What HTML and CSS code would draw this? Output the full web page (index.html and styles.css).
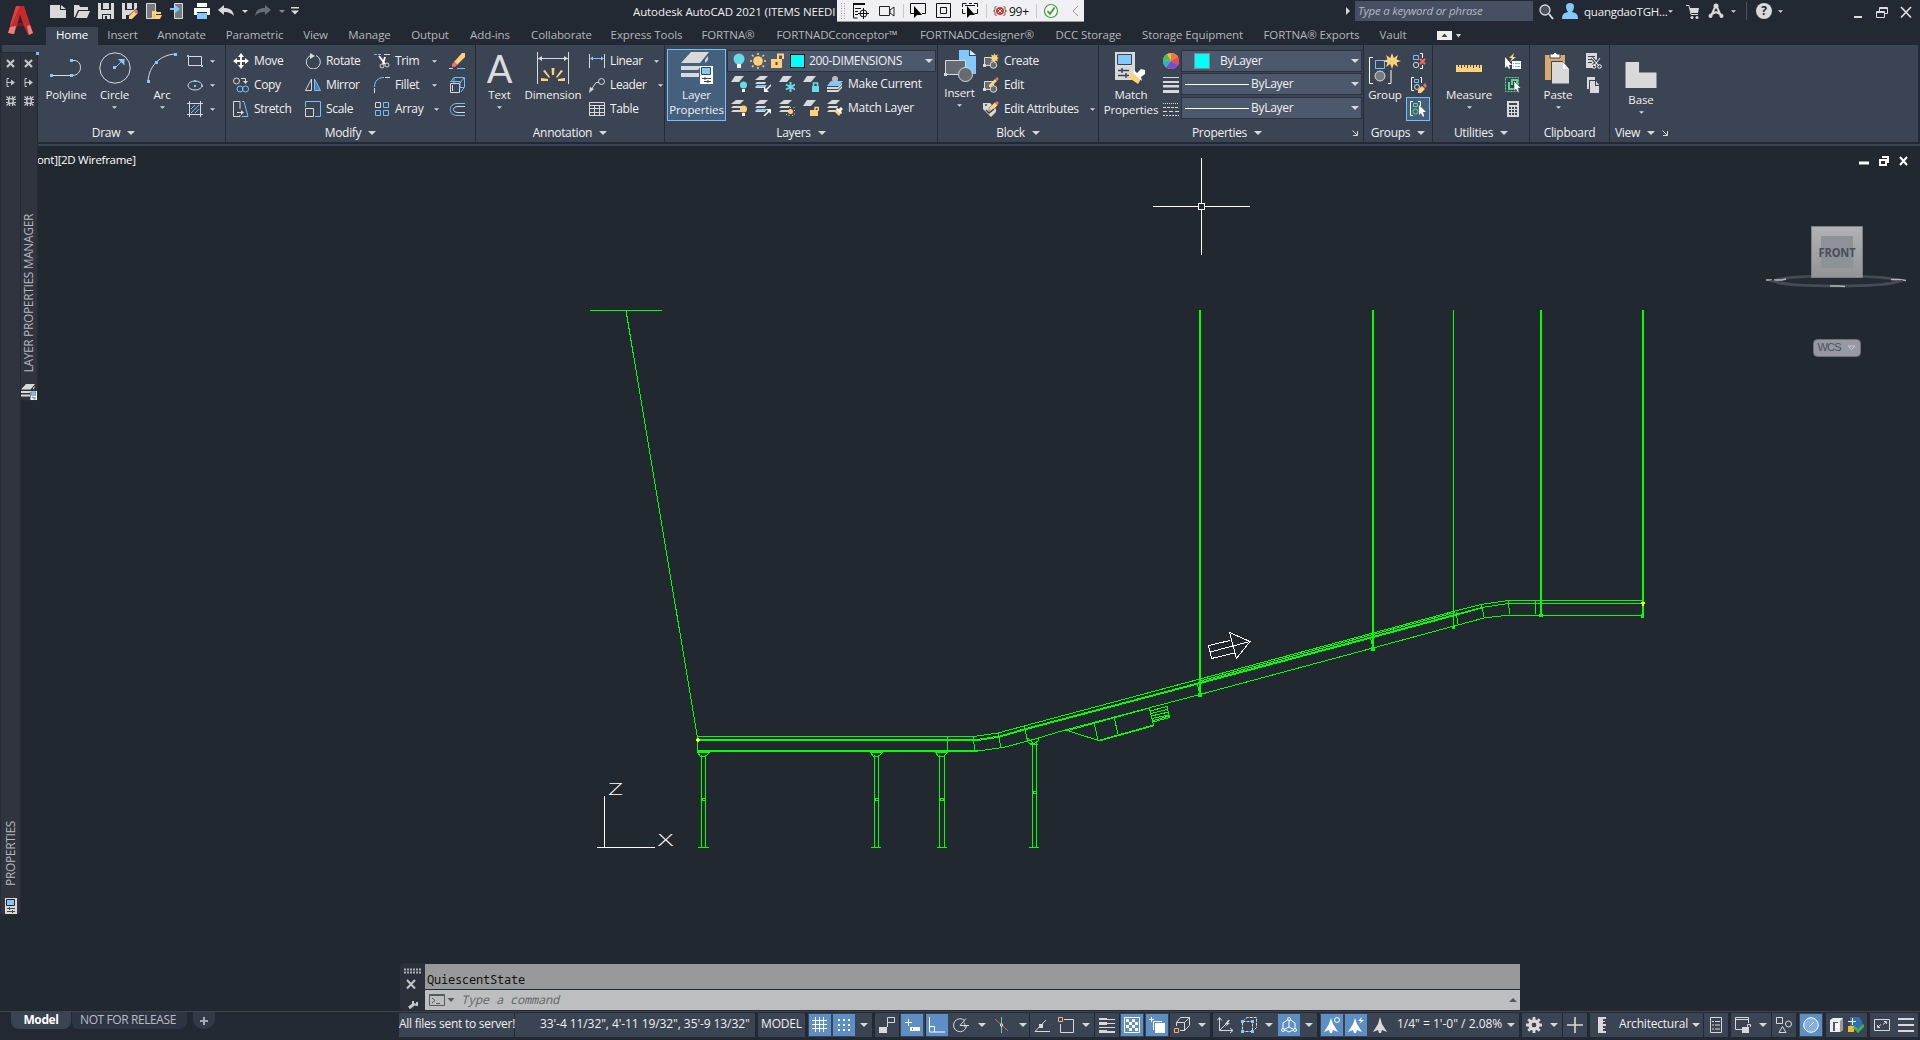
FILE: index.html
```html
<!DOCTYPE html>
<html lang="en">
<head>
<meta charset="utf-8">
<title>Autodesk AutoCAD 2021</title>
<link rel="stylesheet" href="styles.css">
</head>
<body>
<svg class="sprite" aria-hidden="true">
  <!-- quick access -->
  <symbol id="new" viewBox="0 0 16 16"><path class="fl" d="M0 2h10v5h6v8H0zM11 2l5 4h-5z"/></symbol>
  <symbol id="open" viewBox="0 0 16 16"><path class="fl" d="M0 2h5l1 2h8v3H4L1 14H0zM5 8h11l-3 7H2z"/></symbol>
  <symbol id="save" viewBox="0 0 16 16"><path class="fl" d="M0 0h3v7h10V0h3v16h-3v-5H4v5H0zM5 0h6v6H5zM5 12h7v4H9v-3H7v3H5z"/></symbol>
  <symbol id="saveas" viewBox="0 0 16 16"><path class="fl" d="M0 0h3v7h9V0h3v5l-8 7H4v4H0zM5 0h5v6H5z"/><path class="fy" d="M7 13l6-6 3 3-6 6H7z"/><path class="fr" d="M12 8l2-2 2 2-2 3z"/></symbol>
  <symbol id="fromweb" viewBox="0 0 16 16"><path fill="#777b80" stroke="#d9d9d9" d="M.5.500h9v15h-9z"/><path class="fy" d="M6 8h4l1 1h4v2H9l-2 5H6zM9 12h7l-2 4H7z"/></symbol>
  <symbol id="toweb" viewBox="0 0 16 16"><path fill="#777b80" stroke="#d9d9d9" d="M4.500.500h8v15h-8z"/><path class="fb" d="M0 5h5V2l5 4-5 4V7H0z"/></symbol>
  <symbol id="print" viewBox="0 0 16 16"><path fill="#fff" d="M3 0h10v4H3zM0 5h16v7h-3V9H3v3H0z"/><path class="fb" d="M3 10h10v6H3z"/></symbol>
  <symbol id="undo" viewBox="0 0 16 16"><path class="fl" d="M0 7l6-5v3c6 0 9 2 10 8-3-3-5-4-10-4v3z"/></symbol>
  <symbol id="redo" viewBox="0 0 16 16"><path fill="#686e77" d="M16 7l-6-5v3C4 5 1 7 0 13c3-3 5-4 10-4v3z"/></symbol>
  <symbol id="dn" viewBox="0 0 8 4"><path class="fl" d="M0 0h8L4 4z"/></symbol>
  <symbol id="menu" viewBox="0 0 8 8"><path class="fl" d="M0 0h8v1.500H0zM0 3.500h8l-4 4z"/></symbol>
  <!-- draw -->
  <symbol id="polyline" viewBox="0 0 32 32"><path class="l" d="M1 23.500h20M21 8.500h3c9 0 9 15-2 15"/><path class="fb" d="M0 22h3v3H0zM20 22h3v3h-3zM20 7h3v3h-3z"/></symbol>
  <symbol id="circle" viewBox="0 0 32 32"><circle class="l" cx="16" cy="16" r="15.200"/><path class="b" d="M16 16l8-8"/><path class="fb" d="M14 14h3v3h-3zM19 7h6.500v6.500z"/></symbol>
  <symbol id="arc" viewBox="0 0 32 32"><path class="l" d="M2 29C3 14 14 3 29 2"/><path class="fb" d="M1 28h3v3H1zM9 9h3v3H9zM28 1h3v3h-3z"/></symbol>
  <symbol id="rect" viewBox="0 0 16 16"><path class="l" d="M1.500 3.500h13v9h-13z"/><path class="fb" d="M0 2h2v2H0zM14 12h2v2h-2z"/></symbol>
  <symbol id="ellipse" viewBox="0 0 16 16"><ellipse class="l" cx="8" cy="8.500" rx="7" ry="4.500"/><path class="fb" d="M7 3h2v2H7zM7 8h2v2H7zM14 8h2v2h-2z"/></symbol>
  <symbol id="hatch" viewBox="0 0 16 16"><path class="l" d="M0 2.500h16M0 13.500h16M2.500 0v16M13.500 0v16"/><path class="b" d="M4 8l4-4M4 12l8-8M8 12l4-4"/></symbol>
  <!-- modify -->
  <symbol id="move" viewBox="0 0 16 16"><path class="w2" d="M8 2v12M2 8h12"/><path fill="#fff" d="M8 0l3 4H5zM8 16l3-4H5zM0 8l4-3v6zM16 8l-4-3v6z"/></symbol>
  <symbol id="copy" viewBox="0 0 16 16"><circle class="l" cx="3.500" cy="4" r="3"/><path class="l" d="M8 1.500h4.500V5"/><path class="fl" d="M10 4h5l-2.500 3z"/><circle class="b" cx="7" cy="12" r="3"/><circle class="b" cx="12.500" cy="12" r="3"/></symbol>
  <symbol id="stretch" viewBox="0 0 16 16"><path class="l" d="M7 8V.500H.500v15H7V14M4 11.500h5"/><path class="fl" d="M8 9l3 2.500L8 14z"/><path class="b" d="M9 .500h2l4 15H9"/></symbol>
  <symbol id="rotate" viewBox="0 0 16 16"><path class="l" d="M11 2.500a7 7 0 1 1-6 .300M10 3"/><path class="fl" d="M5 0l5 3-5 3z"/></symbol>
  <symbol id="mirror" viewBox="0 0 16 16"><path class="l" d="M.500 13.500h6V2z"/><path class="mf" d="M15.500 13.500h-6V2z"/></symbol>
  <symbol id="scale" viewBox="0 0 16 16"><path class="b" d="M.500 6V.500h15v15H10"/><path class="l" d="M.500 7.500h8v8h-8z"/></symbol>
  <symbol id="trim" viewBox="0 0 16 16"><path class="b" stroke-dasharray="3 1" d="M0 1.500h8"/><path class="l" d="M10 1.500h6"/><path class="w2" d="M5 3l6 8M11 4l-2 7"/><circle class="l" cx="8" cy="13" r="2"/><circle class="l" cx="13" cy="12" r="2"/></symbol>
  <symbol id="fillet" viewBox="0 0 16 16"><path class="b" d="M.500 10C.500 4 4 .500 10 .500"/><path class="l" d="M.500 11v5M11 .500h5"/></symbol>
  <symbol id="array" viewBox="0 0 16 16"><path class="l" d="M1.500 1.500h5v5h-5z"/><path class="b" d="M9.500 1.500h5v5h-5zM1.500 9.500h5v5h-5zM9.500 9.500h5v5h-5z"/></symbol>
  <symbol id="erase" viewBox="0 0 16 16"><path class="fy" d="M5 9l8-9h3v4l-8 8z"/><path class="fr" d="M3 11l2.500-2.500 3 3L6 14H3z"/><path class="l" d="M0 15.500h4"/><path class="b" d="M8 15.500h8"/></symbol>
  <symbol id="explode" viewBox="0 0 16 16"><path class="l" d="M1.500 6.500h9v9h-9zM3.500 8v6"/><path class="b" d="M1.500 5L5 .500h10.500v9.500l-3.500 5M5 1v5M11 6l4-5M1.500 4.500h9.500v6h4"/></symbol>
  <symbol id="offset" viewBox="0 0 16 16"><path class="b" d="M16 2.500H8c-9 0-9 12 0 12h8"/><path class="l" d="M16 5.500H9c-6 0-6 6 0 6h7"/></symbol>
  <!-- annotation -->
  <symbol id="dimension" viewBox="0 0 32 32"><path class="l" d="M.500 0v32M31.500 0v32M1 6.500h30"/><path class="fl" d="M1 6.500l4-2.500v5zM31 6.500L27 4v5z"/><path class="fy" d="M14.500 16h3l-.500 7h-2zM6 19l2-1 5 7-1 1zM26 19l-2-1-5 7 1 1zM4 26l7 1v2H4zM28 26l-7 1v2h7z"/></symbol>
  <symbol id="linear" viewBox="0 0 16 16"><path class="l" d="M.500 1v14M15.500 1v14"/><path class="b" d="M2 5.500h12"/><path class="fb" d="M1 5.500l3-2v4zM15 5.500l-3-2v4z"/></symbol>
  <symbol id="leader" viewBox="0 0 16 16"><circle class="l" cx="12.500" cy="4.500" r="3"/><path class="l" d="M10 5.500H7L2 13"/><path class="fl" d="M0 16l1-6 4 2z"/></symbol>
  <symbol id="table" viewBox="0 0 16 16"><path class="l" d="M.500 1.500h15v13H.500zM.500 4.500h15M.500 7.500h15M.500 11.500h15M5.500 4v10M10.500 4v10"/></symbol>
  <!-- layers -->
  <symbol id="layerprops" viewBox="0 0 32 32"><path class="fl" d="M10 0h18l-9 11H0zM0 14h20l-3 4H0zM0 21h18v4H0zM24 8l3-4v4l-3 3z"/><path fill="#fff" d="M19 14h13v18H19z"/><path class="fb" stroke="#3b4453" d="M20.500 15.500h9v7h-9z"/><path stroke="#444" fill="none" d="M21 26.500h9M23 29.500h7M24 25v3M27 28v3"/></symbol>
  <symbol id="bulb" viewBox="0 0 12 16"><circle class="fc" cx="6" cy="6" r="5.500"/><path fill="#fff" d="M4 11h4v4H4z"/></symbol>
  <symbol id="sun" viewBox="0 0 16 16"><circle class="fy" cx="8" cy="8" r="4.800"/><path stroke="#ffd27a" stroke-width="1.500" d="M8 0v2M8 14v2M0 8h2M14 8h2M2 2l1.500 1.500M12.500 12.500L14 14M2 14l1.500-1.500M12.500 3.500L14 2"/></symbol>
  <symbol id="lock" viewBox="0 0 16 16"><path class="fy" d="M1 6h11v9H1z"/><path fill="none" stroke="#ffd27a" stroke-width="2" d="M8 6V1.500h5V6"/><path fill="#3b4453" d="M5.500 9h2v3h-2z"/></symbol>
  <symbol id="sheet" viewBox="0 0 16 16"><path class="fl" d="M4 0h9L8 6H0z"/></symbol>
  <symbol id="stack" viewBox="0 0 16 16"><path class="fl" d="M5 0h8L9 4H0zM2 6h9l-1 2H0zM2 10h9l-1 2H0z"/></symbol>
  <symbol id="l1" viewBox="0 0 16 16"><use href="#sheet"/><circle class="fc" cx="12.500" cy="9" r="3.500"/><path fill="#fff" d="M11 13h3v3h-3z"/></symbol>
  <symbol id="l2" viewBox="0 0 16 16"><use href="#stack"/><path class="fb" d="M2 9h10l-2 2H0z"/><path stroke="#fff" stroke-width="1.500" d="M16 9l-6 6"/><path fill="#fff" d="M9 11v5h5z"/></symbol>
  <symbol id="l3" viewBox="0 0 16 16"><use href="#sheet"/><path stroke="#66dbe8" stroke-width="2" d="M11.500 6v10M7 8.500l9 5M7 13.500l9-5"/></symbol>
  <symbol id="l4" viewBox="0 0 16 16"><use href="#sheet"/><path class="fc" d="M9 10h7v6H9z"/><path fill="none" stroke="#66dbe8" stroke-width="1.500" d="M10.500 10V7h4v3"/></symbol>
  <symbol id="l5" viewBox="0 0 16 16"><path class="fb" d="M4 5h12l-4 5H0z"/><path class="fl" d="M0 11h11l4-4v2l-4 4H0zM0 14h11l4-4v2l-4 4H0z"/><circle cx="8" cy="3" r="3" fill="#b8bcc2"/></symbol>
  <symbol id="l6" viewBox="0 0 16 16"><use href="#stack"/><circle class="fy" cx="12.500" cy="9" r="3.500"/><path fill="#fff" d="M11 13h3v3h-3z"/></symbol>
  <symbol id="l7" viewBox="0 0 16 16"><use href="#stack"/><path class="fb" d="M2 9h10l-2 2H0z"/><path stroke="#fff" stroke-width="1.500" d="M9 16l6-6"/><path fill="#fff" d="M16 14V9h-5z"/></symbol>
  <symbol id="l8" viewBox="0 0 16 16"><use href="#stack"/><circle class="fy" cx="11.500" cy="11.500" r="2.500"/><path stroke="#ffd27a" stroke-dasharray="1 2.500" fill="none" d="M7.500 7.500h8v8h-8z"/></symbol>
  <symbol id="l9" viewBox="0 0 16 16"><use href="#sheet"/><path class="fy" d="M7 10h8v6H7z"/><path fill="none" stroke="#ffd27a" stroke-width="1.500" d="M12 10V7.500h3.300V11"/></symbol>
  <symbol id="l10" viewBox="0 0 16 16"><use href="#stack"/><path class="fy" d="M7 11l3-2 4 4-2 3z"/><path fill="#fff" d="M10 8l2 1 2-2 2 2-2 2 1 2-1 1-5-5z"/></symbol>
  <!-- block -->
  <symbol id="insert" viewBox="0 0 32 32"><path class="fb" d="M15 0h10v6h7v18H15z"/><path fill="#dff0ff" d="M26 0l6 5h-6z"/><path fill="#666a72" stroke="#d9d9d9" d="M1.500 10.500h20v14h-20z"/><circle cx="21.500" cy="24.500" r="7" fill="#666a72" stroke="#d9d9d9"/><path class="fl" d="M0 23h3v3H0z"/></symbol>
  <symbol id="create" viewBox="0 0 16 16"><path fill="#666a72" stroke="#d9d9d9" d="M1.500 4.500h9v8h-9z"/><circle cx="10.500" cy="12" r="3.300" fill="#666a72" stroke="#d9d9d9"/><path class="fy" d="M11.500 0l1 2.500 2.500-1-1 2.500 2 1-2 1 1 2.500-2.500-1-1 2.500-1-2.500-2.500 1 1-2.500-2-1 2-1-1-2.500 2.500 1z"/><path class="fl" d="M0 11h3v3H0z"/></symbol>
  <symbol id="edit" viewBox="0 0 16 16"><path fill="#666a72" stroke="#d9d9d9" d="M1.500 4.500h9v8h-9z"/><circle cx="10.500" cy="12" r="3.300" fill="#666a72" stroke="#d9d9d9"/><path class="fy" d="M6 8l6-6 2 2-6 6H6z"/><path class="fr" d="M12 2l2-2 2 2-2 2z"/><path class="fl" d="M0 11h3v3H0z"/></symbol>
  <symbol id="attr" viewBox="0 0 16 16"><path class="fl" d="M0 2h7l6 6v3l-5 5-8-8z"/><path class="fy" stroke="#3b4453" stroke-width=".5" d="M6 7l6-6 3 3-6 6H6z"/><path class="fr" d="M12 2l2-2 2 2-2 2z"/><path stroke="#3b4453" fill="none" stroke-width="1.500" d="M3 9l3 3 5-4M2 4h2"/></symbol>
  <!-- properties -->
  <symbol id="match" viewBox="0 0 32 32"><path class="fl" d="M0 0h20v28H0z"/><path class="fb" stroke="#3b4453" d="M2.500 2.500h14v10h-14z"/><path stroke="#3b4453" stroke-width="1.500" d="M3 18.500h11M3 23.500h11M7 16v5M11 21v5"/><path class="fy" d="M13 25l5-5 8 7-3 5z"/><path fill="#fff" d="M19 18l3 3 4-4 4 1v4l-4 3 1 4-9-8z"/></symbol>
  <symbol id="wheel" viewBox="0 0 16 16"><circle cx="8" cy="8" r="8" fill="#efc33f"/><path fill="#f2763e" d="M8 8V0a8 8 0 0 1 7 4z"/><path fill="#e34c56" d="M8 8l7-4a8 8 0 0 1 0 8z"/><path fill="#7b4bd6" d="M8 8l7 4a8 8 0 0 1-7 4 8 8 0 0 1-5-2z"/><path fill="#25b5c9" d="M8 8l-5 6a8 8 0 0 1-3-7z"/><path fill="#54b95d" d="M8 8L0 7a8 8 0 0 1 4-6z"/></symbol>
  <symbol id="weights" viewBox="0 0 16 16"><path class="fl" d="M0 0h16v1H0zM0 4h16v2H0zM0 8h16v2.500H0zM0 13h16v3H0z"/></symbol>
  <symbol id="types" viewBox="0 0 16 16"><path class="l" stroke-dasharray="1 1" d="M0 2.500h16"/><path class="l" stroke-dasharray="3 1" d="M0 6.500h16"/><path class="l" stroke-dasharray="4 2" d="M0 10.500h16"/><path class="l" stroke-dasharray="2 1" d="M0 14.500h16"/></symbol>
  <symbol id="launch" viewBox="0 0 6 6"><path class="l" d="M.500.500L5 5M5.500 1v4.500H1"/></symbol>
  <!-- groups -->
  <symbol id="group" viewBox="0 0 32 32"><path class="w" d="M4 5.500H.500v26H4M19 31.500h3V18M14 5.500"/><path class="b" d="M6.500 8.500h9v8h-9z"/><circle cx="11" cy="24" r="5" fill="#777b80" stroke="#d9d9d9"/><path class="fy" d="M23 1l1.800 5L29 3l-1.500 4.500L32 9l-4.500 1.500L29 15l-4.200-3L23 17l-1.800-5-4.200 3 1.500-4.500L14 9l4.500-1.500L17 3l4.200 3z"/></symbol>
  <symbol id="ungroup" viewBox="0 0 16 16"><path class="b" d="M2.500 2.500h5v4h-5z"/><circle class="l" cx="5" cy="12" r="2.700"/><path class="w" d="M9 .500h2.500V5M9 15.500h2.500V12"/><path stroke="#f66" stroke-width="2" d="M9 6l5 5M14 6l-5 5"/></symbol>
  <symbol id="gedit" viewBox="0 0 16 16"><path class="w" d="M3 .500H.500v13H3M9 .500h1.500V6"/><path class="b" d="M3.500 2.500h4v3h-4z"/><circle class="l" cx="6" cy="10" r="2.500"/><path class="fy" d="M7 13l4-4 3 3-4 4H7z"/><path class="fr" d="M12 8l2-2 2 3-2 2z"/></symbol>
  <symbol id="gsel" viewBox="0 0 16 16"><path class="w" d="M3 .500H.500v14H3M8 .500h2.500V5"/><path class="g" d="M3.500 2.500h4v3h-4z"/><circle class="g" cx="5.500" cy="10.500" r="2.500"/><path fill="#fff" d="M9 4v10l2-2 2 4 1-1-1-4h3z"/></symbol>
  <!-- utilities -->
  <symbol id="measure" viewBox="0 0 32 32"><path class="fy" d="M3 13h26v7H3z"/><path stroke="#3b4453" d="M5.500 13v2M8.500 13v3M11.500 13v2M14.500 13v3M17.500 13v2M20.500 13v3M23.500 13v2M26.500 13v3"/></symbol>
  <symbol id="quick" viewBox="0 0 16 16"><path class="fy" d="M9 0L4 5h3l-2 4 6-5H8z"/><path fill="#fff" d="M0 4v11l2-2 2 3 1-1-1-3h3zM7 8h9v8H7z"/><path class="b" d="M8 10.500h1M10 10.500h5M8 13.500h1M10 13.500h5"/></symbol>
  <symbol id="selall" viewBox="0 0 16 16"><path class="g" stroke-dasharray="2 1" d="M.500.500h13v14h-13z"/><path class="g" stroke-width="2" d="M4 5v7h7V10M12 8V3H7v5"/><path fill="#fff" stroke="#333" stroke-width=".5" d="M9 4v10l2-2 2 4 1-1-1-4h3z"/></symbol>
  <symbol id="calc" viewBox="0 0 16 16"><path class="fl" d="M2 0h12v16H2z"/><path fill="#3b4453" d="M4 2h8v2H4zM4 6h2v2H4zM7 6h2v2H7zM10 6h2v2h-2zM4 9h2v2H4zM7 9h2v2H7zM10 9h2v2h-2zM4 12h2v2H4zM7 12h2v2H7zM10 12h2v2h-2z"/></symbol>
  <symbol id="paste" viewBox="0 0 32 32"><path fill="#d9a871" d="M3 3h20v25H3z"/><path fill="#fff" stroke="#3b4453" d="M8 2h3l2-2 2 2h3v4H8z"/><path class="fl" stroke="#3b4453" d="M9.500 9.500h11l7 8V32h-18z"/><path fill="#fff" d="M21 10l6 7h-6z"/></symbol>
  <symbol id="cut" viewBox="0 0 16 16"><path class="fl" d="M0 0h11v7l-5 8H0z"/><path stroke="#3b4453" d="M2 3.500h7M2 6.500h4M2 9.500h4"/><path stroke="#3b4453" stroke-width="3" d="M6 5l7 8M14 5l-7 8"/><path class="w" d="M6 5l7 8M14 5l-6 8"/><circle class="w" cx="8" cy="13.500" r="1.800"/><circle class="w" cx="13.500" cy="13.500" r="1.800"/></symbol>
  <symbol id="copyclip" viewBox="0 0 16 16"><path class="fl" d="M1 0h8v3H3v9H1zM4 4h5v5h4v7H4zM10 4l3 4h-3z"/></symbol>
  <symbol id="base" viewBox="0 0 32 32"><path class="fl" d="M0 4h14v11h18v16H0z"/></symbol>
  <!-- palettes -->
  <symbol id="px" viewBox="0 0 9 9"><path stroke="#c4c6ca" stroke-width="2.200" d="M1 1l7 7M8 1L1 8"/></symbol>
  <symbol id="pin" viewBox="0 0 9 9"><path stroke="#c4c6ca" fill="none" d="M3 .500H1v8h2M1 4.500h6"/><path fill="#c4c6ca" d="M5 1.500l4 3-4 3z"/></symbol>
  <symbol id="gearp" viewBox="0 0 10 10"><path fill="none" stroke="#c4c6ca" stroke-width="1.500" d="M2.800 2.800h4.400v4.400H2.800z"/><path stroke="#c4c6ca" stroke-width="1.200" d="M3.500 0v2.500M6.500 0v2.500M3.500 7.500V10M6.500 7.500V10M0 3.500h2.500M0 6.500h2.500M7.500 3.500H10M7.500 6.500H10M.500.500l2 2M9.500.500l-2 2M.500 9.500l2-2M9.500 9.500l-2-2"/></symbol>
  <symbol id="pal" viewBox="0 0 12 16"><path class="fl" d="M0 0h12v16H0z"/><path class="fb" stroke="#222" d="M1.500 1.500h8v6h-8z"/><path stroke="#444" fill="none" d="M2 10.500h8M2 13.500h8M4.500 9v3M7.500 12v3"/></symbol>
  <!-- status bar -->
  <symbol id="grid" viewBox="0 0 16 16"><path class="w" d="M3.500 0v15M7.500 0v15M11.500 0v15M0 3.500h15M0 7.500h15M0 11.500h15"/></symbol>
  <symbol id="snap" viewBox="0 0 16 16"><path fill="#fff" d="M2 2h2v2H2zM7 2h2v2H7zM12 2h2v2h-2zM2 7h2v2H2zM7 7h2v2H7zM12 7h2v2h-2zM2 12h2v2H2zM7 12h2v2H7zM12 12h2v2h-2z"/></symbol>
  <symbol id="infer" viewBox="0 0 16 16"><path class="fl" d="M0 10h8v6H0z"/><path class="l" d="M8.500 10V.500h7v5h-7"/></symbol>
  <symbol id="dyn" viewBox="0 0 16 16"><path class="w" d="M4.500 2v7M1 5.500h7"/><path fill="#fff" d="M6 10h10v4H6z"/><path fill="#5d8fc4" d="M8 11h1v2H8z"/></symbol>
  <symbol id="ortho" viewBox="0 0 16 16"><path class="w" d="M.500 0v15H16M1 9.500h4.500V15"/></symbol>
  <symbol id="polar" viewBox="0 0 16 16"><path class="l" d="M12 4a6.500 6.500 0 1 0 1.500 5M7 8.500h9M7 8.500l6-7M11 5.500c1 1 1 3 1 5"/></symbol>
  <symbol id="iso" viewBox="0 0 16 16"><path stroke="#e0605e" d="M1 2l13 12"/><path stroke="#5fd68b" d="M7.500 0v16"/><path fill="#3b4453" stroke="#ddd" d="M6.500 7h2v2h-2z"/></symbol>
  <symbol id="otrack" viewBox="0 0 16 16"><path class="l" d="M16 14.500H1L12 3"/><path class="fl" d="M5 7h4v4H5z"/></symbol>
  <symbol id="osnap" viewBox="0 0 16 16"><path class="l" d="M6 2.500h9.500v13h-13V7"/><path fill="none" stroke="#f5b183" d="M.500.500h4v4h-4z"/></symbol>
  <symbol id="lw" viewBox="0 0 16 16"><path class="fl" d="M0 1h8v2H0zM8 2h8v1H8zM0 5h8v3H0zM8 6h8v1H8zM0 10h16v1H0zM0 13h8v3H0zM8 14h8v2H8z"/></symbol>
  <symbol id="trans" viewBox="0 0 16 16"><path class="w" d="M.500.500h15v15H.500z"/><path fill="#fff" d="M2 2h3v3H2zM8 2h3v3H8zM5 5h3v3H5zM11 5h3v3h-3zM2 8h3v3H2zM8 8h3v3H8zM5 11h3v3H5zM11 11h3v3h-3z"/></symbol>
  <symbol id="cycle" viewBox="0 0 16 16"><path class="w" d="M2.500 0v5M0 2.500h5M4.500 13V4.500H13"/><path fill="#fff" d="M6 6h10v10H6z"/></symbol>
  <symbol id="osnap3" viewBox="0 0 16 16"><path class="l" d="M2.500 9V5.500h8v8H6M2.500 5.500l4-5h9v8l-5 5M10.500 5.500l5-5"/><path fill="none" stroke="#f5b183" d="M.500 11.500h4v4h-4z"/></symbol>
  <symbol id="ucs" viewBox="0 0 16 16"><path class="l" d="M2.500 1v12.500H15M0 3.500L2.500.500 5 3.500M13 11l3 2.500L13 16M2.500 13.500L9 7"/><path class="fl" d="M11 3L8 7h2l-2 3 5-4h-2l2-3z"/></symbol>
  <symbol id="filter" viewBox="0 0 16 16"><path class="l" stroke-dasharray="3 1" d="M1.500 4.500h10v10h-10zM2 4l4-3.500h9.500v10l-4 4"/><path class="fb" d="M0 3h3v3H0zM10 3h3v3h-3zM0 13h3v3H0zM10 13h3v3h-3z"/></symbol>
  <symbol id="gizmo" viewBox="0 0 16 16"><path class="w" d="M8 2l6 4v6l-6 3-6-3V6zM8 2v8l-6 3M8 10l6 3"/><circle cx="8" cy="2" r="1.500" fill="#5d8fc4" stroke="#fff"/><circle cx="2" cy="13" r="1.500" fill="#5d8fc4" stroke="#fff"/><circle cx="14" cy="13" r="1.500" fill="#5d8fc4" stroke="#fff"/></symbol>
  <symbol id="anno" viewBox="0 0 16 16"><path class="fl" d="M8 0l2 7 5 8-5-2-1 3H7l-1-3-5 2 5-8z"/></symbol>
  <symbol id="anno1" viewBox="0 0 16 16"><path fill="#fff" d="M7 1l2 6 5 8-5-2-1 3H6l-1-3-5 2 5-8z"/><circle cx="13" cy="3" r="2.500" fill="none" stroke="#fff"/></symbol>
  <symbol id="anno2" viewBox="0 0 16 16"><path fill="#fff" d="M7 1l2 6 5 8-5-2-1 3H6l-1-3-5 2 5-8zM14 0l-4 4h3l-2 3 5-4h-3z"/></symbol>
  <symbol id="gear" viewBox="0 0 16 16"><circle cx="8" cy="8" r="4" fill="none" stroke="#d9d9d9" stroke-width="3.500"/><path stroke="#d9d9d9" stroke-width="2.800" d="M8 0v4M8 12v4M0 8h4M12 8h4M2.300 2.300L5 5M11 11l2.700 2.700M2.300 13.700L5 11M11 5l2.700-2.700"/><circle cx="8" cy="8" r="2.200" fill="#3b4453"/></symbol>
  <symbol id="plus" viewBox="0 0 16 16"><path class="l" stroke-width="1.600" d="M8 0v16M0 8h16"/></symbol>
  <symbol id="ruler" viewBox="0 0 16 16"><path class="fl" d="M4 0h8v2H9v2h2v1H9v2h3v2H9v2h2v1H9v2h3v2H4z"/></symbol>
  <symbol id="list" viewBox="0 0 16 16"><path class="l" d="M2.500.500h11v15h-11zM4 4.500h2M7 4.500h5M4 8h2M7 8h5M4 12h2M7 12h5"/></symbol>
  <symbol id="uilock" viewBox="0 0 16 16"><path class="l" d="M7 12.500H.500v-12h13V6M.500 2.500h13"/><path class="fl" d="M7 10h7v6H7z"/><path class="l" d="M12.500 10V7.500h3V10"/></symbol>
  <symbol id="isolate" viewBox="0 0 16 16"><path class="l" d="M.500.500h6v6h-6zM3 15.500l3.500-6 3.500 6z"/><circle class="l" cx="12.500" cy="7" r="3"/></symbol>
  <symbol id="perf" viewBox="0 0 16 16"><circle cx="8" cy="8" r="7.300" fill="#84b0dd" stroke="#fff"/><path class="w" d="M6 10l5-5"/></symbol>
  <symbol id="cube" viewBox="0 0 16 16"><path fill="#eee" d="M1 3l3-2h10v12l-3 2H1z"/><path fill="#999" d="M11 4l3-3v12l-3 2z"/><path fill="#55585c" d="M4 5h5v6H6v3H4z"/><path fill="#fff" d="M6 6h4v5H6z"/></symbol>
  <symbol id="trusted" viewBox="0 0 16 16"><path fill="#2f6fb5" d="M2 0h9l3 4v8H2z"/><path fill="#f5b92f" d="M0 9h6v6H0z"/><path class="w" d="M0 4.500h8M4.500 1v7"/><path stroke="#3fb24a" stroke-width="3" fill="none" d="M6 10l4 4 6-6"/></symbol>
  <symbol id="full" viewBox="0 0 16 16"><path class="l" d="M.500 2.500h15v11H.500zM4 10l3-2.500M9 7.500L12 5M3.500 8v2.500H6M10 4.500h2.500V7"/></symbol>
  <symbol id="burger" viewBox="0 0 16 16"><path class="fl" d="M0 1h16v2H0zM0 7h16v2H0zM0 13h16v2H0z"/></symbol>
</svg>

<header class="titlebar">
  <div class="qat">
    <svg class="i"><use href="#new"/></svg><svg class="i"><use href="#open"/></svg><svg class="i"><use href="#save"/></svg><svg class="i"><use href="#saveas"/></svg><svg class="i"><use href="#fromweb"/></svg><svg class="i"><use href="#toweb"/></svg><svg class="i"><use href="#print"/></svg><svg class="i"><use href="#undo"/></svg><svg class="a"><use href="#dn"/></svg><svg class="i"><use href="#redo"/></svg><svg class="a dim"><use href="#dn"/></svg><svg class="m"><use href="#menu"/></svg>
  </div>
  <div class="title">Autodesk AutoCAD 2021 (ITEMS NEEDI</div>
  <div class="debugbar">
    <svg width="247" height="22" viewBox="0 0 247 22">
      <path d="M4.500 3v17M7.500 3v17" stroke="#999" stroke-dasharray="1 1.500"/>
      <path d="M16 4h12" stroke="#111" stroke-width="2"/><path d="M16.500 3v15h4M18 8.500h6M18 11.500h3M18 14.500h3" stroke="#111" fill="none"/><circle cx="26.500" cy="13.500" r="3.500" fill="none" stroke="#111"/><path d="M26.500 8v11M21 13.500h11" stroke="#111"/>
      <path d="M42.500 6.500h10v9h-10zM53 10l4-3v9l-4-3z" fill="none" stroke="#222"/>
      <path d="M66.500 4v14M149.500 4v14M199.500 4v14" stroke="#c9c8cf"/>
      <path d="M77 13.500h-3.500v-10h15v10H85" fill="none" stroke="#111"/><path d="M77 6v12l3-3h5z"/>
      <path d="M99.500 3.500h14v14h-14zM103.500 7.500h6v6h-6z" fill="none" stroke="#111"/>
      <path d="M125.500 7V3.500h4M132 3.500h3M137 3.500h3.500V7M125.500 9v4.500h3M140.500 9v4.500h-3M128 5.500h10" fill="none" stroke="#111"/><path d="M130 6v12l3-3h5z"/>
      <circle cx="163" cy="11" r="4" fill="#e3342b"/><path d="M161 9l4 4M165 9l-4 4" stroke="#fff"/><path d="M159.500 6.500c-3 0 0 4-3 4.500 3 .500 0 4.500 3 4.500M166.500 6.500c3 0 0 4 3 4.500-3 .500 0 4.500-3 4.500" fill="none" stroke="#444"/>
      <text x="172" y="16" class="dbgtext" textLength="20">99+</text>
      <circle cx="214" cy="11" r="6.500" fill="#fff" stroke="#3a9b35" stroke-width="1.200"/><path d="M210.500 11l2.500 3 4.500-6.500" fill="none" stroke="#3a9b35" stroke-width="1.800"/>
      <path d="M241 6l-5 5 5 5" fill="none" stroke="#999"/>
    </svg>
  </div>
  <svg class="tri" viewBox="0 0 4 8"><path class="fl" d="M0 0l4 4-4 4z"/></svg>
  <div class="search">Type a keyword or phrase</div>
  <svg class="lens" viewBox="0 0 16 16"><circle cx="6" cy="6" r="5" fill="#4a5160" stroke="#d9d9d9" stroke-width="1.300"/><path d="M10 10l4 5" stroke="#d9d9d9" stroke-width="2"/></svg>
  <svg class="user" viewBox="0 0 16 16"><path class="fb" d="M4 3c0-4 8-4 8 0 0 3-1 5-2 6 4 1 6 2 6 7H0c0-5 2-6 6-7-1-1-2-3-2-6z"/></svg>
  <div class="account">quangdaoTGH...</div>
  <svg class="a s"><use href="#dn"/></svg>
  <svg class="cart" viewBox="0 0 14 16"><path class="l" d="M0 1.500h3l2 9h7"/><path class="fl" d="M3.500 4H13l-1 5H5z"/><circle class="fl" cx="6" cy="13.500" r="1.500"/><circle class="fl" cx="11" cy="13.500" r="1.500"/></svg>
  <svg class="adsk" viewBox="0 0 16 16"><path d="M8 2L3 13M8 2l5 11M2 12l6-3 6 3" fill="none" stroke="#d9d9d9" stroke-width="2"/><circle class="fl" cx="8" cy="3" r="2.500"/><circle class="fl" cx="2.500" cy="13" r="2"/><circle class="fl" cx="13.500" cy="13" r="2"/></svg>
  <svg class="a s"><use href="#dn"/></svg>
  <span class="vsep"></span>
  <span class="help">?</span>
  <svg class="a s"><use href="#dn"/></svg>
  <svg class="win" viewBox="0 0 60 14"><path d="M2 11h8" stroke="#ddd" stroke-width="2"/><path d="M24.500 5.500h8v6h-8zM27.500 5V1.500h8v6H33M24 6.500h8M27 2.500h8" fill="none" stroke="#ddd"/><path d="M49 1l10 10.500M59 1L49 11.500" stroke="#ddd" stroke-width="1.700"/></svg>
</header>

<nav class="tabs">
  <span class="tab on t1">Home</span><span class="tab t2">Insert</span><span class="tab t3">Annotate</span><span class="tab t4">Parametric</span><span class="tab t5">View</span><span class="tab t6">Manage</span><span class="tab t7">Output</span><span class="tab t8">Add-ins</span><span class="tab t9">Collaborate</span><span class="tab t10">Express Tools</span><span class="tab t11">FORTNA®</span><span class="tab t12">FORTNADCconceptor™</span><span class="tab t13">FORTNADCdesigner®</span><span class="tab t14">DCC Storage</span><span class="tab t15">Storage Equipment</span><span class="tab t16">FORTNA® Exports</span><span class="tab t17">Vault</span>
  <svg class="collapse" viewBox="0 0 24 9"><path fill="#eee" d="M0 0h15v9H0z"/><path fill="#444" d="M4.500 6h6l-3-3.500z"/><path class="fl" d="M19 3h5l-2.500 3.500z"/></svg>
</nav>

<section class="ribbon">
  <div class="panel p-draw">
    <div class="tools">
      <div class="big"><svg><use href="#polyline"/></svg><span>Polyline</span></div>
      <div class="big"><svg><use href="#circle"/></svg><span>Circle</span><svg class="a s"><use href="#dn"/></svg></div>
      <div class="big"><svg><use href="#arc"/></svg><span>Arc</span><svg class="a s"><use href="#dn"/></svg></div>
      <div class="rows"><div><svg class="i"><use href="#rect"/></svg><svg class="a s"><use href="#dn"/></svg></div><div><svg class="i"><use href="#ellipse"/></svg><svg class="a s"><use href="#dn"/></svg></div><div><svg class="i"><use href="#hatch"/></svg><svg class="a s"><use href="#dn"/></svg></div></div>
    </div>
    <div class="cap">Draw<svg class="a"><use href="#dn"/></svg></div>
  </div>
  <div class="panel p-modify">
    <div class="tools">
      <div class="rows"><div><svg class="i"><use href="#move"/></svg>Move</div><div><svg class="i"><use href="#copy"/></svg>Copy</div><div><svg class="i"><use href="#stretch"/></svg>Stretch</div></div>
      <div class="rows"><div><svg class="i"><use href="#rotate"/></svg>Rotate</div><div><svg class="i"><use href="#mirror"/></svg>Mirror</div><div><svg class="i"><use href="#scale"/></svg>Scale</div></div>
      <div class="rows drop"><div><svg class="i"><use href="#trim"/></svg>Trim<svg class="a s far"><use href="#dn"/></svg></div><div><svg class="i"><use href="#fillet"/></svg>Fillet<svg class="a s far"><use href="#dn"/></svg></div><div><svg class="i"><use href="#array"/></svg>Array<svg class="a s"><use href="#dn"/></svg></div></div>
      <div class="rows"><div><svg class="i"><use href="#erase"/></svg></div><div><svg class="i"><use href="#explode"/></svg></div><div><svg class="i"><use href="#offset"/></svg></div></div>
    </div>
    <div class="cap">Modify<svg class="a"><use href="#dn"/></svg></div>
  </div>
  <div class="panel p-annot">
    <div class="tools">
      <div class="big"><span class="bigA">A</span><span>Text</span><svg class="a s"><use href="#dn"/></svg></div>
      <div class="big"><svg><use href="#dimension"/></svg><span class="wide">Dimension</span></div>
      <div class="rows drop"><div><svg class="i"><use href="#linear"/></svg>Linear<svg class="a s"><use href="#dn"/></svg></div><div><svg class="i"><use href="#leader"/></svg>Leader<svg class="a s"><use href="#dn"/></svg></div><div><svg class="i"><use href="#table"/></svg>Table</div></div>
    </div>
    <div class="cap">Annotation<svg class="a"><use href="#dn"/></svg></div>
  </div>
  <div class="panel p-layers">
    <div class="tools">
      <div class="big sel"><svg><use href="#layerprops"/></svg><span>Layer</span><span>Properties</span></div>
      <div class="layercol">
        <div class="combo layer"><svg class="bulb"><use href="#bulb"/></svg><svg class="i"><use href="#sun"/></svg><svg class="i"><use href="#lock"/></svg><i class="sw"></i><span>200-DIMENSIONS</span><svg class="a"><use href="#dn"/></svg></div>
        <div class="lrow"><svg class="i"><use href="#l1"/></svg><svg class="i"><use href="#l2"/></svg><svg class="i"><use href="#l3"/></svg><svg class="i"><use href="#l4"/></svg><svg class="i"><use href="#l5"/></svg><span>Make Current</span></div>
        <div class="lrow"><svg class="i"><use href="#l6"/></svg><svg class="i"><use href="#l7"/></svg><svg class="i"><use href="#l8"/></svg><svg class="i"><use href="#l9"/></svg><svg class="i"><use href="#l10"/></svg><span>Match Layer</span></div>
      </div>
    </div>
    <div class="cap">Layers<svg class="a"><use href="#dn"/></svg></div>
  </div>
  <div class="panel p-block">
    <div class="tools">
      <div class="big up"><svg><use href="#insert"/></svg><span>Insert</span><svg class="a s"><use href="#dn"/></svg></div>
      <div class="rows drop"><div><svg class="i"><use href="#create"/></svg>Create</div><div><svg class="i"><use href="#edit"/></svg>Edit</div><div><svg class="i"><use href="#attr"/></svg>Edit Attributes<svg class="a s"><use href="#dn"/></svg></div></div>
    </div>
    <div class="cap">Block<svg class="a"><use href="#dn"/></svg></div>
  </div>
  <div class="panel p-props">
    <div class="tools">
      <div class="big"><svg><use href="#match"/></svg><span>Match</span><span>Properties</span></div>
      <div class="rows"><div><svg class="i"><use href="#wheel"/></svg></div><div><svg class="i"><use href="#weights"/></svg></div><div><svg class="i"><use href="#types"/></svg></div></div>
      <div class="combos">
        <div class="combo"><i class="sw"></i><span>ByLayer</span><svg class="a"><use href="#dn"/></svg></div>
        <div class="combo"><i class="ln"></i><span>ByLayer</span><svg class="a"><use href="#dn"/></svg></div>
        <div class="combo"><i class="ln"></i><span>ByLayer</span><svg class="a"><use href="#dn"/></svg></div>
      </div>
    </div>
    <div class="cap">Properties<svg class="a"><use href="#dn"/></svg><svg class="launch"><use href="#launch"/></svg></div>
  </div>
  <div class="panel p-groups">
    <div class="tools">
      <div class="big"><svg><use href="#group"/></svg><span>Group</span></div>
      <div class="rows"><div><svg class="i"><use href="#ungroup"/></svg></div><div><svg class="i"><use href="#gedit"/></svg></div><div class="selbox"><svg class="i"><use href="#gsel"/></svg></div></div>
    </div>
    <div class="cap">Groups<svg class="a"><use href="#dn"/></svg></div>
  </div>
  <div class="panel p-utils">
    <div class="tools">
      <div class="big"><svg><use href="#measure"/></svg><span>Measure</span><svg class="a s"><use href="#dn"/></svg></div>
      <div class="rows"><div><svg class="i"><use href="#quick"/></svg></div><div><svg class="i"><use href="#selall"/></svg></div><div><svg class="i"><use href="#calc"/></svg></div></div>
    </div>
    <div class="cap">Utilities<svg class="a"><use href="#dn"/></svg></div>
  </div>
  <div class="panel p-clip">
    <div class="tools">
      <div class="big"><svg><use href="#paste"/></svg><span>Paste</span><svg class="a s"><use href="#dn"/></svg></div>
      <div class="rows"><div><svg class="i"><use href="#cut"/></svg></div><div><svg class="i"><use href="#copyclip"/></svg></div></div>
    </div>
    <div class="cap">Clipboard</div>
  </div>
  <div class="panel p-view">
    <div class="tools">
      <div class="big down"><svg><use href="#base"/></svg><span>Base</span><svg class="a s"><use href="#dn"/></svg></div>
    </div>
    <div class="cap">View<svg class="a"><use href="#dn"/></svg><svg class="launch"><use href="#launch"/></svg></div>
  </div>
</section>
<div class="strip"></div>

<main class="workspace">
  <svg class="model" viewBox="0 146 1920 865" width="1920" height="865">
    <!-- hangers -->
    <g class="cad2"><path d="M1200 310v386M1373 310v340M1541 310v307M1643 310v307"/></g>
    <g class="cad"><path d="M1453.500 310v319M590 310.500h72M626 310.500L697.500 738"/></g>
    <g fill="#0f0"><path d="M1198 693h4v4h-4zM1371 647h4v4h-4zM1452 626h3v3h-3zM1539 614h4v3h-4zM1641 614h3v4h-3z"/></g>
    <!-- conveyor bed -->
    <g class="cad">
      <path d="M697.500 751V736.500H973.500L998 733l26-7 176-47 173-46 82-22 26-6.500 27-4h135"/>
      <path d="M974 740l26-4 24-7 176-46.500 173-46 82-22 27-7 26-4h135"/>
      <path d="M975 741l25-4 24-7 176-46.500 173-46 82-22 27-7.500"/>
      <path d="M1200 681l173-46.500 82-22"/>
      <path d="M975 751.500l28-4 27-7 35-10.500 135-35.500 173-46.500 83-22.500 28-7.500 25-3h135"/>
      <path d="M947.500 736v15M973.500 736l1 15M998 733l3 14.500M1024 726l3.500 14.500M1197 683l3 12M1370.500 638l2.500 10M1456 612l2 12M1481.500 604l2.500 13M1508.500 600.500l1 14M1535.500 601v13M697.500 738v14"/>
      <path d="M1065.500 730l33 10.500 55-15.500-4.500-17.500M1094 722l4 18M1114 717l4 17M1150 711l17-4.500 2.500 11L1153 722M1150.500 713.500l17-4M1151 716l18-4M1152 718.500l17-3.500"/>
      <path d="M1066 731l84-23M1099 741l54-15M1152 721l17-5"/>
      <!-- floor supports -->
      <path d="M701.500 755v92M705.500 755v92M698 847.500h11M874.500 755v92M878.500 755v92M871 847.500h10M939.500 755v92M944.500 755v92M937 847.500h10M1032.500 742v105M1036.500 742v105M1029 847.500h10"/>
      <path d="M697.500 752.500h12l-4 4h-5zM870.500 752.500h12l-4 4h-5zM935.500 752.500h12l-4 4h-5zM1027 741l12-3-1 3-4 3-5-1zM702 798.500h3v2h-3zM875 798.500h3v2h-3zM940.500 798.500h3v2h-3zM1033 791.500h3v2h-3z"/>
      <path d="M1028 738l4 4M1030 744h8"/>
    </g>
    <g class="cad2"><path d="M697 740h281M697 751h281"/></g>
    <path d="M696 739h4v2h-4zM697 738h2v4h-2zM1642 602h2v4h-2zM1641 602h4v2h-4z" fill="#ff0"/>
    <!-- flow direction arrow -->
    <path class="white" d="M1230 640.500l-21.500 5 3 13 23-5.500M1210 652l40-10.500M1229.500 632.500l20.500 9-13.500 17z"/>
    <!-- ucs icon -->
    <path class="crisp" d="M604.500 796v52M597 847.500h58"/>
    <text class="axis" x="608" y="795" textLength="15" lengthAdjust="spacingAndGlyphs">Z</text><text class="axis" x="658" y="846" textLength="15" lengthAdjust="spacingAndGlyphs">X</text>
    <!-- crosshair -->
    <path class="crisp" d="M1201.500 158v45M1201.500 210v45M1153 206.500h45M1205 206.500h45M1198.500 203.500h6v6h-6z"/>
    <!-- view cube -->
    <defs><linearGradient id="face" x1="0" y1="0" x2="0" y2="1"><stop offset="0" stop-color="#b0b2b5"/><stop offset="1" stop-color="#929497"/></linearGradient></defs>
    <ellipse cx="1836.500" cy="281" rx="62" ry="5" fill="#252b34" stroke="#464c55" stroke-width="2.500"/>
    <path d="M1766 280h6M1774 280h8l4-1M1891 279.500h8l7 1M1830 286h8l7 .500" stroke="#b5b5b5" stroke-width="1.500" fill="none"/>
    <path d="M1770 281l20 3M1903 281l-20 3" stroke="#464c55" stroke-width="2"/>
    <rect x="1811.500" y="226.500" width="51" height="51" fill="url(#face)" stroke="#7c8084"/>
    <rect x="1821" y="236" width="32" height="32" fill="#8d9298"/>
    <text class="front" x="1818.500" y="257" textLength="37" lengthAdjust="spacingAndGlyphs">FRONT</text>
    <rect x="1813.500" y="339.500" width="47" height="17" rx="4" fill="#9698a4" stroke="#6e707c"/>
    <text class="wcs" x="1817.500" y="351" textLength="24">WCS</text>
    <path d="M1848 346h7l-3.500 3.500z" fill="none" stroke="#c4c6ce"/>
    <!-- document window buttons -->
    <path d="M1859 163h10" stroke="#fff" stroke-width="3"/><path d="M1880 160h6v5h-6zM1882 157h6v6" fill="none" stroke="#fff" stroke-width="2"/><path d="M1900 157l7 8M1907 157l-7 8" stroke="#fff" stroke-width="2"/>
  </svg>
  <div class="viewlabel">ont][2D Wireframe]</div>

  <div class="cmd">
    <div class="grip"><svg width="24" height="47" viewBox="0 0 24 47"><path d="M4 6.500h18M4 9.500h18" stroke="#aeb1b6" stroke-width="2" stroke-dasharray="2 1"/><path d="M7 17l8 8.500M15 17l-8 8.500" stroke="#c4c6ca" stroke-width="2"/><path d="M9 45l5-4" stroke="#c4c6ca" stroke-width="3"/><path d="M13 38v3l4 1v-3" fill="none" stroke="#c4c6ca" stroke-width="2"/></svg></div>
    <div class="cmdbody">
      <div class="hist">QuiescentState</div>
      <div class="input"><svg width="26" height="14" viewBox="0 0 26 14"><path d="M.500 1.500h15v11H.500zM0 2.500h16M3 5l3 2.500L3 10M7 10.500h4" fill="none" stroke="#55585c"/><path d="M18.500 5h7L22 9z" fill="#55585c"/></svg><span>Type a command</span><svg class="up" width="8" height="4" viewBox="0 0 8 4"><path d="M0 4h8L4 0z" fill="#55585c"/></svg></div>
    </div>
  </div>
</main>

<footer class="bottom">
  <div class="sheets"><span class="model-tab">Model</span><span class="sheet">NOT FOR RELEASE</span><span class="add"></span></div>
  <div class="status">
    <div class="blk b1"><span class="tx">All files sent to server!</span></div>
    <div class="blk b2"><span class="tx">33'-4 11/32", 4'-11 19/32", 35'-9 13/32"</span></div>
    <div class="blk b3"><span class="tx">MODEL</span></div>
    <div class="blk b4"><b><svg class="i"><use href="#grid"/></svg></b><b><svg class="i"><use href="#snap"/></svg></b><svg class="a"><use href="#dn"/></svg></div>
    <div class="blk b5"><svg class="i"><use href="#infer"/></svg></div>
    <div class="blk b6"><b><svg class="i"><use href="#dyn"/></svg></b></div>
    <div class="blk b7"><b><svg class="i"><use href="#ortho"/></svg></b><svg class="i"><use href="#polar"/></svg><svg class="a"><use href="#dn"/></svg><svg class="i"><use href="#iso"/></svg><svg class="a"><use href="#dn"/></svg></div>
    <div class="blk b8"><svg class="i"><use href="#otrack"/></svg><svg class="i"><use href="#osnap"/></svg><svg class="a"><use href="#dn"/></svg></div>
    <div class="blk b9"><svg class="i"><use href="#lw"/></svg></div>
    <div class="blk b10"><b><svg class="i"><use href="#trans"/></svg></b></div>
    <div class="blk b11"><b><svg class="i"><use href="#cycle"/></svg></b></div>
    <div class="blk b12"><svg class="i"><use href="#osnap3"/></svg><svg class="a"><use href="#dn"/></svg></div>
    <div class="blk b13"><svg class="i"><use href="#ucs"/></svg><svg class="i"><use href="#filter"/></svg><svg class="a"><use href="#dn"/></svg><b><svg class="i"><use href="#gizmo"/></svg></b><svg class="a"><use href="#dn"/></svg></div>
    <div class="blk b14"><b><svg class="i"><use href="#anno1"/></svg></b><b><svg class="i"><use href="#anno2"/></svg></b><svg class="i"><use href="#anno"/></svg><span class="tx">1/4" = 1'-0" / 2.08%</span><svg class="a"><use href="#dn"/></svg></div>
    <div class="blk b15"><svg class="i"><use href="#gear"/></svg><svg class="a"><use href="#dn"/></svg></div>
    <div class="blk b16"><svg class="i"><use href="#plus"/></svg></div>
    <div class="blk b17"><svg class="i"><use href="#ruler"/></svg><span class="tx">Architectural</span><svg class="a"><use href="#dn"/></svg></div>
    <div class="blk b18"><svg class="i"><use href="#list"/></svg></div>
    <div class="blk b19"><svg class="i"><use href="#uilock"/></svg><svg class="a"><use href="#dn"/></svg></div>
    <div class="blk b20"><svg class="i"><use href="#isolate"/></svg></div>
    <div class="blk b21"><b><svg class="i"><use href="#perf"/></svg></b></div>
    <div class="blk b22"><svg class="i"><use href="#cube"/></svg><svg class="i"><use href="#trusted"/></svg></div>
    <div class="blk b23"><svg class="i"><use href="#full"/></svg><svg class="i"><use href="#burger"/></svg></div>
  </div>
</footer>

<!-- application button and docked palettes float above the ribbon -->
<svg class="logo" viewBox="0 0 25 29"><path fill="#c62a2c" d="M8 0h8l9 27-5 2-4-9H9l-3 8-6-1z"/><path fill="#8c1418" d="M12 8l4 12H9z"/><path fill="#222933" d="M12 10l2.500 7H10z"/><path fill="#e9827c" d="M2 21l6-1-2 8-6-1zM19 20l3-1 3 8-4 2z"/><path fill="#e04040" d="M8 0h4L3 20l-1-1z"/></svg>
<aside class="palette props"><svg class="pb"><use href="#px"/></svg><svg class="pb"><use href="#pin"/></svg><svg class="pb"><use href="#gearp"/></svg><span class="vt">PROPERTIES</span><svg class="pi"><use href="#pal"/></svg></aside>
<aside class="palette layersm"><svg class="pb"><use href="#px"/></svg><svg class="pb"><use href="#pin"/></svg><svg class="pb"><use href="#gearp"/></svg><span class="vt">LAYER PROPERTIES MANAGER</span><svg class="pi2"><use href="#layerprops"/></svg></aside>
<i class="corner"></i>
</body>
</html>
```
FILE: styles.css
```css
* { box-sizing: border-box; }
body {
  margin: 0; width: 1920px; height: 1040px; overflow: hidden;
  background: #222933; color: #f0f0f0;
  font: 11.5px/16px "Open Sans", "Noto Sans", sans-serif;
  letter-spacing: -0.1px; white-space: nowrap;
  display: flex; flex-direction: column; position: relative;
}
svg { display: block; flex: none; }
.sprite { position: absolute; width: 0; height: 0; }

/* icon paints */
.l { fill: none; stroke: #d9d9d9; }
.w { fill: none; stroke: #fff; }
.w2 { fill: none; stroke: #fff; stroke-width: 1.800; }
.b { fill: none; stroke: #74c0fc; }
.mf { fill: #4d7fae; stroke: #74c0fc; }
.g { fill: none; stroke: #5fd68b; }
.fl { fill: #d9d9d9; }
.fb { fill: #83c8fb; }
.fy { fill: #ffd27a; }
.fr { fill: #f4696b; }
.fc { fill: #66dbe8; }
.i { width: 16px; height: 16px; }
.a { width: 8px; height: 4px; }
.a.s { width: 5px; height: 3px; }
.dim { opacity: .55; }

/* title bar */
.titlebar { height: 27px; flex: none; display: flex; align-items: flex-start; }
.qat { display: flex; align-items: center; height: 22px; margin-left: 50px; width: 583px; gap: 8px; }
.qat .a { width: 6px; height: 3px; margin-left: 0; }
.qat .a + .i { margin-left: -1px; }
.qat .i + .dim { margin-left: 0; }
.qat .m { width: 8px; height: 8px; margin-left: -2px; }
.title { width: 204px; line-height: 24px; overflow: hidden; }
.debugbar { width: 247px; height: 22px; background: #f0eff4; border-bottom: 1px solid #999; flex: none; }
.dbgtext { font: 12px "Open Sans", sans-serif; fill: #111; }
.tri { width: 4px; height: 8px; margin: 7px 0 0 262px; }
.search { width: 178px; height: 20px; margin: 1px 0 0 5px; padding-left: 3px; background: #474f63; color: #b4b8c0; font-style: italic; line-height: 20px; letter-spacing: -0.25px; }
.lens { width: 16px; height: 16px; margin: 4px 0 0 6px; }
.user { width: 16px; height: 16px; margin: 3px 0 0 7px; }
.account { width: 84px; margin-left: 6px; line-height: 24px; letter-spacing: -0.2px; }
.titlebar > .a { margin-top: 10px; }
.cart { width: 14px; height: 16px; margin: 4px 0 0 13px; }
.adsk { width: 16px; height: 16px; margin: 3px 7px 0 8px; }
.vsep { width: 1px; height: 18px; margin: 2px 9px 0 10px; background: #4b5563; }
.help { width: 16px; height: 16px; margin: 3px 6px 0 0; border-radius: 50%; background: #d9d9d9; color: #222933; text-align: center; font-weight: 700; font-size: 12px; }
.win { width: 60px; height: 14px; margin: 6px 0 0 69px; }

/* ribbon tabs */
.tabs { height: 18px; flex: none; display: flex; padding-left: 46px; color: #b4b7bb; }
.tab { line-height: 16px; text-align: center; display: flex; justify-content: center; }
.on { background: #3b4453; color: #fff; }
.t1 { width: 52px; } .t2 { width: 49px; } .t3 { width: 69px; } .t4 { width: 77px; } .t5 { width: 45px; }
.t6 { width: 63px; } .t7 { width: 58px; } .t8 { width: 62px; } .t9 { width: 81px; } .t10 { width: 89px; }
.t11 { width: 74px; } .t12 { width: 144px; } .t13 { width: 136px; } .t14 { width: 87px; } .t15 { width: 121px; }
.t16 { width: 117px; } .t17 { width: 46px; }
.collapse { width: 24px; height: 9px; margin: 4px 0 0 21px; }

/* ribbon panels */
.ribbon { height: 97px; flex: none; display: flex; padding-left: 2px; }
.panel { background: #3b4453; border-right: 1px solid #252b36; display: flex; flex-direction: column; }
.tools { height: 76px; padding-top: 4px; display: grid; }
.cap { height: 21px; display: flex; align-items: center; justify-content: center; gap: 7px; padding-top: 3px; font-size: 12px; letter-spacing: -0.3px; }
.launch { width: 6px; height: 6px; }
.big { display: flex; flex-direction: column; align-items: center; height: 72px; padding-top: 3px; }
.big > svg:not(.a) { width: 32px; height: 32px; margin-bottom: 3px; }
.big span { line-height: 15px; }
.big .a { margin-top: 4px; }
.big.up { padding-top: 1px; }
.big.down { padding-top: 9px; }
.big.down > svg:not(.a) { height: 31px; margin-bottom: 3px; }
.big .bigA { font: 38px/32px Lato, sans-serif; height: 32px; margin-bottom: 3px; color: #dcdcdc; }
.sel { border: 1px solid #74c0fc; background: #45607c; padding-top: 2px; }
.rows > div { height: 24px; display: flex; align-items: center; gap: 5px; font-size: 12px; letter-spacing: -0.35px; }
.rows .a { margin-left: 6px; }
.drop .a { margin-left: 6px; }
.drop .a.far { margin-left: 8px; }
.combo { height: 22px; background: #4c586c; border: 1px solid #2b313d; display: flex; align-items: center; }
.combo .a { margin-left: auto; margin-right: 2px; }
.sw { width: 14px; height: 14px; background: #0ff; border: 1px solid #111; }

.p-draw { width: 224px; } .p-draw .tools { grid-template-columns: 48px 49px 46px 40px; padding-left: 40px; }
.p-draw .rows { padding-left: 2px; } .p-draw .rows .a { margin-left: 2px; }
.p-modify { width: 250px; } .p-modify .tools { grid-template-columns: 72px 69px 75px 20px; padding-left: 7px; }
.p-annot { width: 189px; } .p-annot .tools { grid-template-columns: 47px 60px 74px; column-gap: 0; }
.p-annot .rows { padding-left: 6px; }
.p-layers { width: 273px; } .p-layers .tools { grid-template-columns: 59px 209px; padding-left: 2px; column-gap: 1px; }
.layercol { padding-top: 1px; }
.layer .bulb { width: 12px; height: 16px; margin: 0 5px; }
.layer .i + .i { margin-left: 4px; }
.layer .sw { margin: 0 4px 0 4px; width: 15px; }
.layer span { font-size: 12px; letter-spacing: -0.350px; }
.lrow { height: 24px; display: flex; align-items: center; gap: 8px; padding-left: 4px; font-size: 12px; letter-spacing: -0.25px; }
.lrow span { margin-left: -3px; }
.p-block { width: 161px; } .p-block .tools { grid-template-columns: 45px 115px; }
.p-block .big { padding-right: 2px; }
.p-props { width: 265px; } .p-props .tools { grid-template-columns: 64px 18px 181px; }
.combos { padding-top: 1px; }
.combos .combo { margin-bottom: 2px; height: 22px; }
.combos .combo:nth-child(1) { margin-bottom: 1px; }
.combos .sw { margin: 0 10px 0 12px; width: 16px; height: 16px; border-color: #888; }
.combos .ln { width: 64px; height: 1px; background: #fff; margin: 0 2px 0 3px; }
.combos span { font-size: 12px; letter-spacing: -0.300px; }
.p-props .cap { position: relative; padding-right: 8px; }
.p-props .launch { position: absolute; right: 5px; top: 9px; }
.p-groups { width: 69px; } .p-groups .tools { grid-template-columns: 42px 26px; }
.p-groups .rows > div { padding-left: 5px; }
.p-groups .rows .selbox { border: 1px solid #74c0fc; background: #45607c; width: 24px; padding-left: 3px; }
.p-utils { width: 97px; } .p-utils .tools { grid-template-columns: 72px 20px; }
.p-clip { width: 80px; } .p-clip .tools { grid-template-columns: 56px 20px; }
.p-view { width: 309px; } .p-view .tools { grid-template-columns: 62px; }
.p-view .cap { justify-content: flex-start; padding-left: 5px; }
.strip { height: 2px; flex: none; margin: 2px 0 0 38px; background: #3b4453; }

/* drawing area */
.workspace { height: 865px; flex: none; position: relative; background: #212830; }
.model { position: absolute; left: 0; top: 0; }
.cad { fill: none; stroke: #0f0; shape-rendering: crispEdges; }
.cad2 { fill: none; stroke: #0f0; stroke-width: 2; shape-rendering: crispEdges; }
.white, .crisp { fill: none; stroke: #fff; shape-rendering: crispEdges; }
.axis { font: 300 17px "Open Sans", sans-serif; fill: #fff; }
.front { font: 700 12px "Open Sans", sans-serif; fill: #484d57; }
.wcs { font: 11px "Liberation Sans", sans-serif; fill: #4d505c; }
.viewlabel { position: absolute; left: 37px; top: 6px; font-size: 11.5px; letter-spacing: -0.3px; color: #fff; }

/* floating command line */
.cmd { position: absolute; left: 400px; top: 817px; width: 1120px; height: 47px; display: flex; }
.grip { width: 25px; background: #2b303b; border-radius: 3px 0 0 3px; }
.cmdbody { flex: 1; padding-top: 1px; font: 12px "Noto Sans Mono", "DejaVu Sans Mono", monospace; letter-spacing: -0.200px; }
.hist { height: 25px; background: #98999b; color: #111; padding: 8px 0 0 2px; line-height: 15px; }
.input { height: 20px; margin-top: 1px; background: #bcbec0; color: #66686c; display: flex; align-items: center; padding: 0 3px 1px 4px; font-style: italic; }
.input span { margin: -1px 0 0 6px; }
.input .up { margin-left: auto; }

/* bottom row */
.bottom { height: 29px; flex: none; border-top: 1px solid #3f454f; display: flex; background: #222933; }
.sheets { width: 399px; display: flex; height: 17px; line-height: 15px; font-size: 12px; }
.model-tab { width: 60px; margin-left: 11px; background: #3b4453; font-weight: 700; color: #fff; text-align: center; border-radius: 0 0 8px 8px; letter-spacing: -0.4px; }
.sheet { width: 115px; margin-left: 1px; background: #2e3542; color: #b9bcc1; text-align: center; border-radius: 0 0 8px 6px; padding-right: 3px; letter-spacing: -0.400px; }
.add { width: 22px; margin-left: 6px; border-radius: 0 0 10px 10px; background:
  linear-gradient(#a6aab0, #a6aab0) center / 8px 2px no-repeat,
  linear-gradient(#a6aab0, #a6aab0) center / 2px 8px no-repeat, #333a47; }
.status { display: flex; padding-top: 1px; height: 25px; }
.blk { height: 24px; background: #3b4453; display: flex; align-items: center; flex: none; margin-right: 1px; font-size: 12px; letter-spacing: -0.200px; }
.blk .tx { margin-top: -2px; }
.blk b { width: 22px; height: 22px; background: #5d8fc4; display: flex; align-items: center; justify-content: center; flex: none; }
.blk .a { width: 8px; }
.b1 { width: 115px; letter-spacing: -0.25px; }
.b2 { width: 240px; margin-right: 3px; padding-left: 25px; letter-spacing: -0.08px; }
.b3 { width: 47px; margin-right: 3px; justify-content: center; }
.b4 { width: 64px; margin-right: 3px; padding-left: 1px; } .b4 b + b { margin: 0 5px 0 2px; }
.b5 { width: 24px; padding-left: 4px; }
.b6 { width: 25px; padding-left: 1px; }
.b7 { width: 103px; } .b7 .i { margin-left: 5px; } .b7 b .i { margin: 0; } .b7 .a { margin: 0 2px 0 9px; } .b7 .a + .i { margin-left: 6px; }
.b8 { width: 64px; padding-left: 4px; gap: 8px; }
.b9 { width: 24px; padding-left: 4px; }
.b10 { width: 24px; padding-left: 1px; }
.b11 { width: 24px; padding-left: 1px; }
.b12 { width: 40px; padding-left: 4px; gap: 8px; margin-right: 3px; }
.b13 { width: 104px; padding-left: 4px; gap: 8px; margin-right: 3px; } .b13 b { margin: 0 -3px; }
.b14 { width: 199px; padding-left: 1px; margin-right: 3px; } .b14 b + b { margin: 0 5px 0 2px; } .b14 .tx { width: 106px; margin: -2px 4px 0 9px; letter-spacing: 0; }
.b15 { width: 40px; padding-left: 4px; gap: 8px; }
.b16 { width: 24px; padding-left: 4px; margin-right: 3px; }
.b17 { width: 113px; padding-left: 4px; } .b17 .tx { width: 69px; margin: -2px 4px 0 9px; }
.b18 { width: 24px; padding-left: 4px; margin-right: 3px; }
.b19 { width: 40px; padding-left: 4px; gap: 8px; }
.b20 { width: 24px; padding-left: 4px; margin-right: 3px; }
.b21 { width: 24px; padding-left: 1px; margin-right: 3px; }
.b22 { width: 41px; padding-left: 3px; gap: 3px; margin-right: 3px; }
.b23 { width: 48px; padding-left: 4px; gap: 8px; margin-right: 0; }

/* floating pieces */
.logo { position: absolute; left: 8px; top: 6px; width: 25px; height: 29px; }
.corner { position: absolute; left: 36px; top: 52px; width: 3px; height: 3px; background: #74c0fc; }
.palette { position: absolute; top: 52px; background: #30343f; border: 1px solid #252a34; border-bottom-right-radius: 3px; display: flex; flex-direction: column; align-items: center; color: #b5b8bd; }
.palette.props { left: 0; width: 21px; height: 863px; }
.palette.layersm { left: 20px; width: 18px; height: 349px; padding-right: 1px; }
.pb { width: 9px; height: 9px; margin: 6px 0 4px; }
.pb + .pb { margin-top: 6px; }
.pb + .pb + .pb { width: 10px; height: 10px; margin-top: 5px; }
.vt { writing-mode: vertical-rl; transform: rotate(180deg); margin-top: auto; font-size: 12px; letter-spacing: -0.360px; line-height: 17px; }
.pi { width: 12px; height: 16px; margin: 12px 0 0; }
.pi2 { width: 16px; height: 16px; margin: 12px 0 0; }
```
